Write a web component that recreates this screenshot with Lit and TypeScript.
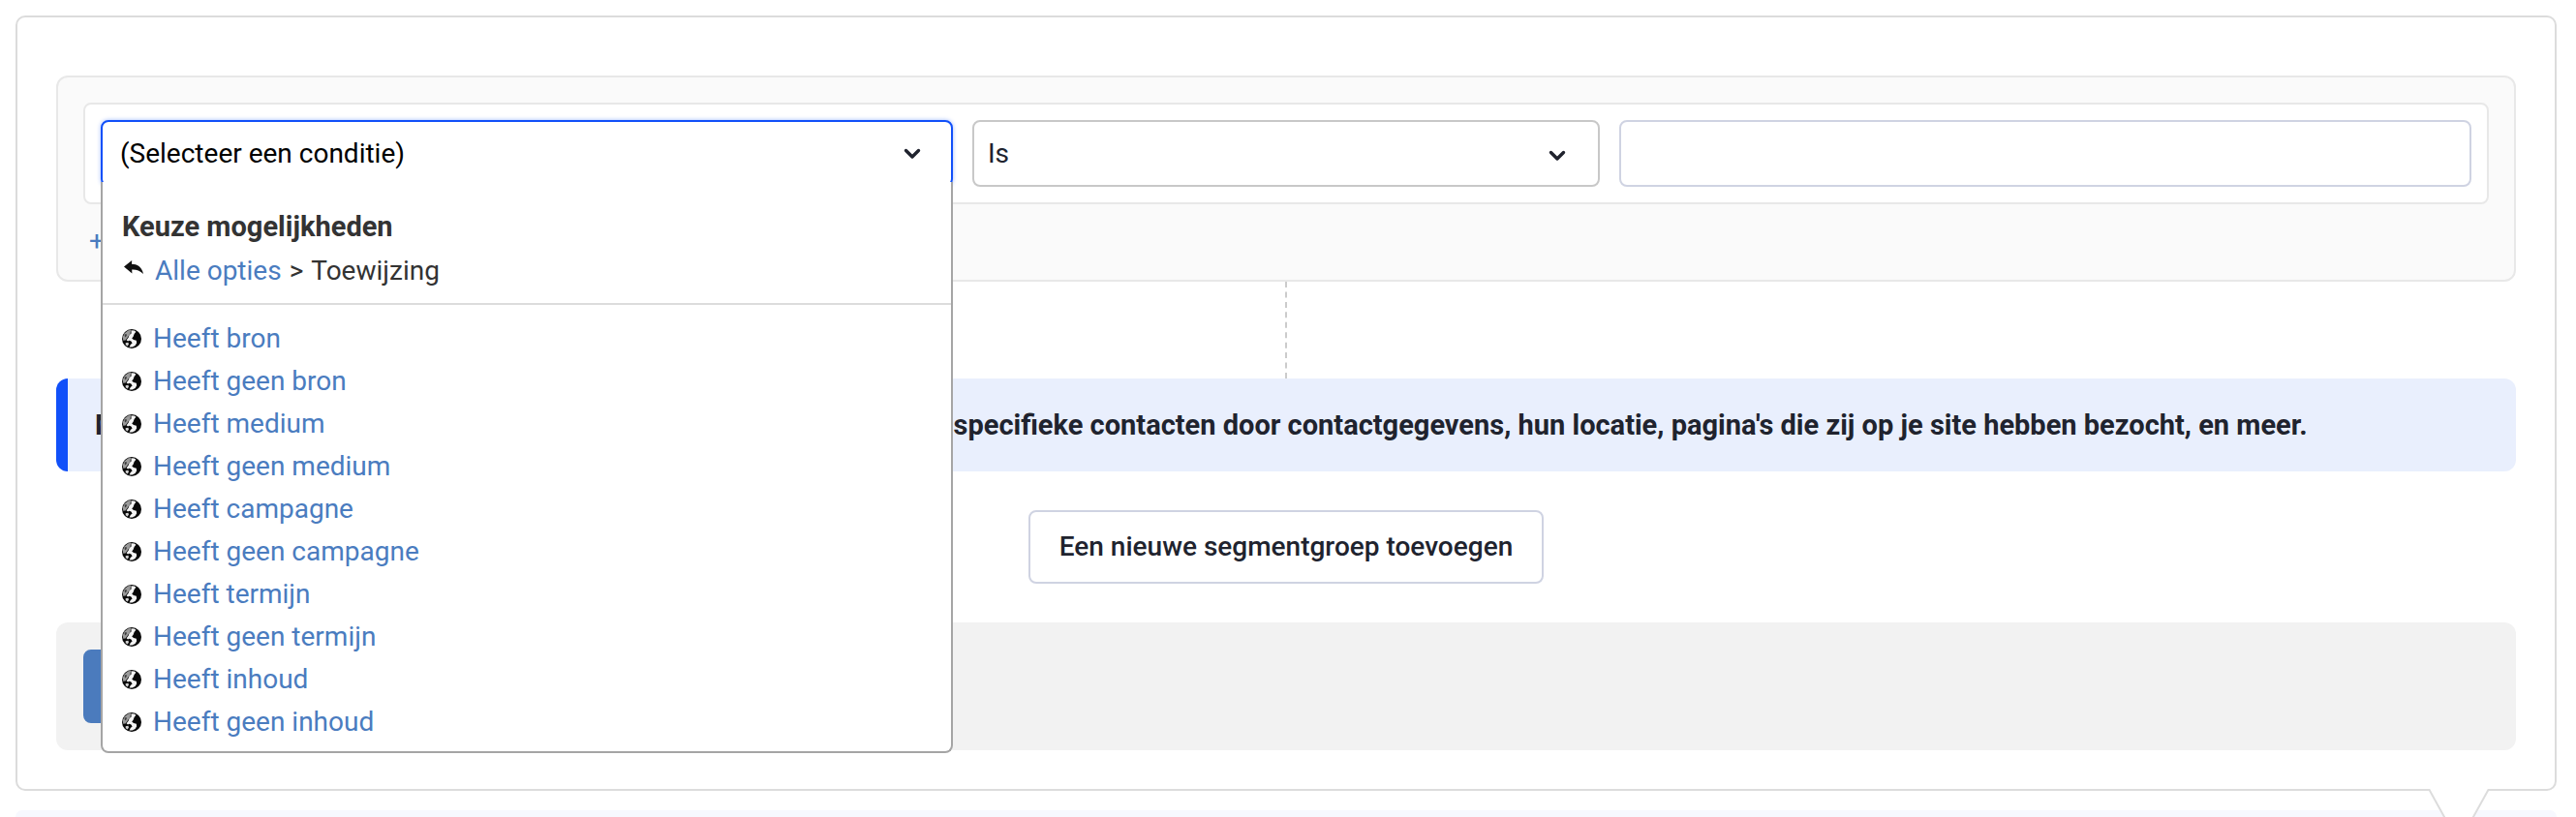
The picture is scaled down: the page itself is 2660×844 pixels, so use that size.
import { LitElement, html, css, svg } from "lit";
import { customElement, state } from "lit/decorators.js";

const OPTIONS = [
  "Heeft bron",
  "Heeft geen bron",
  "Heeft medium",
  "Heeft geen medium",
  "Heeft campagne",
  "Heeft geen campagne",
  "Heeft termijn",
  "Heeft geen termijn",
  "Heeft inhoud",
  "Heeft geen inhoud",
];

const chevron = html`<svg class="chevron" viewBox="0 0 20 14" aria-hidden="true">
  <path d="M3.5 3.5 10 10l6.500-6.500" fill="none" stroke="currentColor" stroke-width="3.4" stroke-linecap="round" stroke-linejoin="round" />
</svg>`;

const globe = () => html`<svg class="globe" viewBox="0 0 20 20" aria-hidden="true">
  ${svg`
    <circle cx="10" cy="10" r="10" fill="#080808" />
    <path d="M6 1.600 9 .8 8.600 4.400 5.800 8.600 3.600 11.400 1.200 11.800.8 8 2.800 4.200Z" fill="#9a9a9a" />
    <path d="M2.600 5.400 4.600 5 4.800 7 3 8.600Z" fill="#3c3c3c" />
    <path d="M9.400 1.200 12.800 1.400 14.400 2.800 12.600 5 11.600 7.800 10.200 9.600 12 11 14.800 11.800 15.200 14.200 13.600 17 10.600 18.600 7.600 18.400 8.800 16 10.600 14.400 9.400 12.600 7.600 11.800 6 12.400 4.600 11.200 6.600 8.800 7.600 6 9.600 4.400Z" fill="#f4f4f4" />
    <path d="M3.600 14.200 6.400 13.800 7 15.600 5.600 17.400 3.800 16.200Z" fill="#d2d2d2" />
  `}
</svg>`;

@customElement("app-root")
export class AppRoot extends LitElement {
  @state() private open = true;

  static styles = css`
    :host {
      display: block;
      font-family: Roboto, "Noto Sans", sans-serif;
      font-size: 28px;
      line-height: 44px;
      color: #20232e;
      background: #fff;
    }
    * {
      box-sizing: border-box;
    }
    button,
    select,
    input {
      font: inherit;
      color: inherit;
      margin: 0;
    }
    a {
      color: #4a7cbf;
      text-decoration: none;
    }
    .shell {
      display: flex;
      flex-direction: column;
      gap: 20px;
      min-height: 100vh;
      padding: 16px 20px 0 16px;
      overflow: hidden;
    }
    .card {
      position: relative;
      display: flex;
      flex-direction: column;
      padding: 60px 40px 40px;
      border: 2px solid #dcdcdc;
      border-radius: 10px;
      background: #fff;
    }
    .group {
      padding: 26px 26px 18px;
      border: 2px solid #e8e8e8;
      border-radius: 12px;
      background: #fafafa;
    }
    .conditions {
      display: grid;
      grid-template-columns: 880fr 648fr 880fr;
      gap: 20px;
      padding: 16px;
      border: 2px solid #e8e8e8;
      border-radius: 8px;
      background: #fff;
    }
    .field {
      position: relative;
      display: grid;
      align-items: center;
      min-width: 0;
    }
    .control {
      width: 100%;
      height: 69px;
      border: 2px solid #c8c8c8;
      border-radius: 8px;
      background: #fff;
      outline: none;
    }
    .trigger {
      display: flex;
      align-items: center;
      justify-content: space-between;
      padding: 0 30px 0 18px;
      color: #000;
      text-align: left;
      cursor: pointer;
    }
    .trigger[aria-expanded="true"] {
      border-color: #1150f9;
      box-shadow: 0 0 4px rgba(17, 80, 249, 0.4);
    }
    .operator {
      appearance: none;
      grid-area: 1 / 1;
      padding: 0 64px 0 14px;
    }
    .operator + .chevron {
      grid-area: 1 / 1;
      justify-self: end;
      margin: 4px 34px 0 0;
      pointer-events: none;
    }
    .value {
      padding: 0 16px;
      border-color: #cfd3e2;
    }
    .chevron {
      width: 20px;
      height: 14px;
      color: #20232e;
    }
    .menu {
      position: absolute;
      z-index: 2;
      top: 64px;
      left: 0;
      right: 0;
      padding: 23px 0 8px;
      border: 2px solid #a5a5a5;
      border-top: 0;
      border-radius: 0 0 8px 8px;
      background: #fff;
      color: #333;
    }
    .menu-head {
      padding: 0 20px 10px;
      border-bottom: 2px solid #dcdcdc;
      line-height: 46px;
    }
    .menu-title {
      margin: 0;
      font-size: 29px;
      font-weight: 700;
    }
    .crumbs {
      display: flex;
      align-items: center;
      gap: 8px;
    }
    .back {
      width: 20px;
      height: 24px;
      margin: 0 4px 0 2px;
    }
    .options {
      margin: 0;
      padding: 13px 20px 0;
      list-style: none;
    }
    .option {
      display: flex;
      align-items: center;
      gap: 12px;
    }
    .globe {
      width: 20px;
      height: 20px;
    }
    .add-condition {
      display: block;
      width: max-content;
      margin: 16px 0 0 6px;
    }
    .connector {
      align-self: center;
      height: 100px;
      border-left: 2px dashed #ccc;
    }
    .banner {
      margin: 0;
      padding: 26px 28px;
      border-left: 12px solid #1150f9;
      border-radius: 12px;
      background: #e9effd;
      font-size: 29px;
      font-weight: 700;
      white-space: nowrap;
      overflow: hidden;
    }
    .button {
      height: 76px;
      padding: 0 30px;
      border: 2px solid #cfd3e2;
      border-radius: 8px;
      background: #fff;
      font-weight: 500;
      cursor: pointer;
    }
    .add-group {
      align-self: center;
      margin: 40px 0;
    }
    .footer {
      display: flex;
      padding: 28px;
      border-radius: 12px;
      background: #f2f2f2;
    }
    .primary {
      border-color: #4b7bbd;
      background: #4b7bbd;
      color: #fff;
    }
    .pointer {
      position: absolute;
      z-index: 1;
      top: 100%;
      right: 68px;
      width: 62px;
      height: 58px;
    }
    .next {
      flex: 1;
      border-radius: 10px 10px 0 0;
      background: #f7f8fe;
    }
  `;

  private toggle() {
    this.open = !this.open;
  }

  private renderMenu() {
    return html`<div class="menu" id="condition-menu">
      <div class="menu-head">
        <h3 class="menu-title">Keuze mogelijkheden</h3>
        <div class="crumbs">
          <svg class="back" viewBox="0 0 20 24" aria-hidden="true">
            <path d="M0 7.500 8.200 1 8 4.800C13.500 4.800 18.500 7.500 20 15 16.500 11.200 12.500 10.200 8.200 10.400L8.400 14.500Z" fill="#111" />
          </svg>
          <a href="#opties">Alle opties</a><span>&gt;</span><span>Toewijzing</span>
        </div>
      </div>
      <ul class="options">
        ${OPTIONS.map((o) => html`<li class="option">${globe()}<a href="#optie">${o}</a></li>`)}
      </ul>
    </div>`;
  }

  render() {
    return html`<main class="shell">
      <section class="card">
        <div class="group">
          <div class="conditions">
            <div class="field">
              <button
                class="control trigger"
                type="button"
                aria-expanded=${this.open ? "true" : "false"}
                aria-controls="condition-menu"
                @click=${this.toggle}
              >
                <span>(Selecteer een conditie)</span>${chevron}
              </button>
              ${this.open ? this.renderMenu() : null}
            </div>
            <div class="field">
              <select class="control operator" aria-label="Operator">
                <option>Is</option>
                <option>Is niet</option>
              </select>
              ${chevron}
            </div>
            <div class="field">
              <input class="control value" type="text" aria-label="Waarde" />
            </div>
          </div>
          <a class="add-condition" href="#conditie">+ Nog een conditie toevoegen</a>
        </div>
        <div class="connector"></div>
        <p class="banner">
          Maak segmentgroepen &amp; stem de condities op elkaar af. Richt je op specifieke contacten door contactgegevens, hun locatie, pagina's die zij op je site hebben bezocht, en meer.
        </p>
        <button class="button add-group" type="button">Een nieuwe segmentgroep toevoegen</button>
        <div class="footer">
          <button class="button primary" type="button">Segment opslaan</button>
        </div>
        <svg class="pointer" viewBox="0 0 62 58" aria-hidden="true">
          <path d="M0 0h62v2L31 57 0 2Z" fill="#fff" />
          <path d="M0 0 31 56 62 0" fill="none" stroke="#dcdcdc" stroke-width="2" />
        </svg>
      </section>
      <section class="next"></section>
    </main>`;
  }
}
